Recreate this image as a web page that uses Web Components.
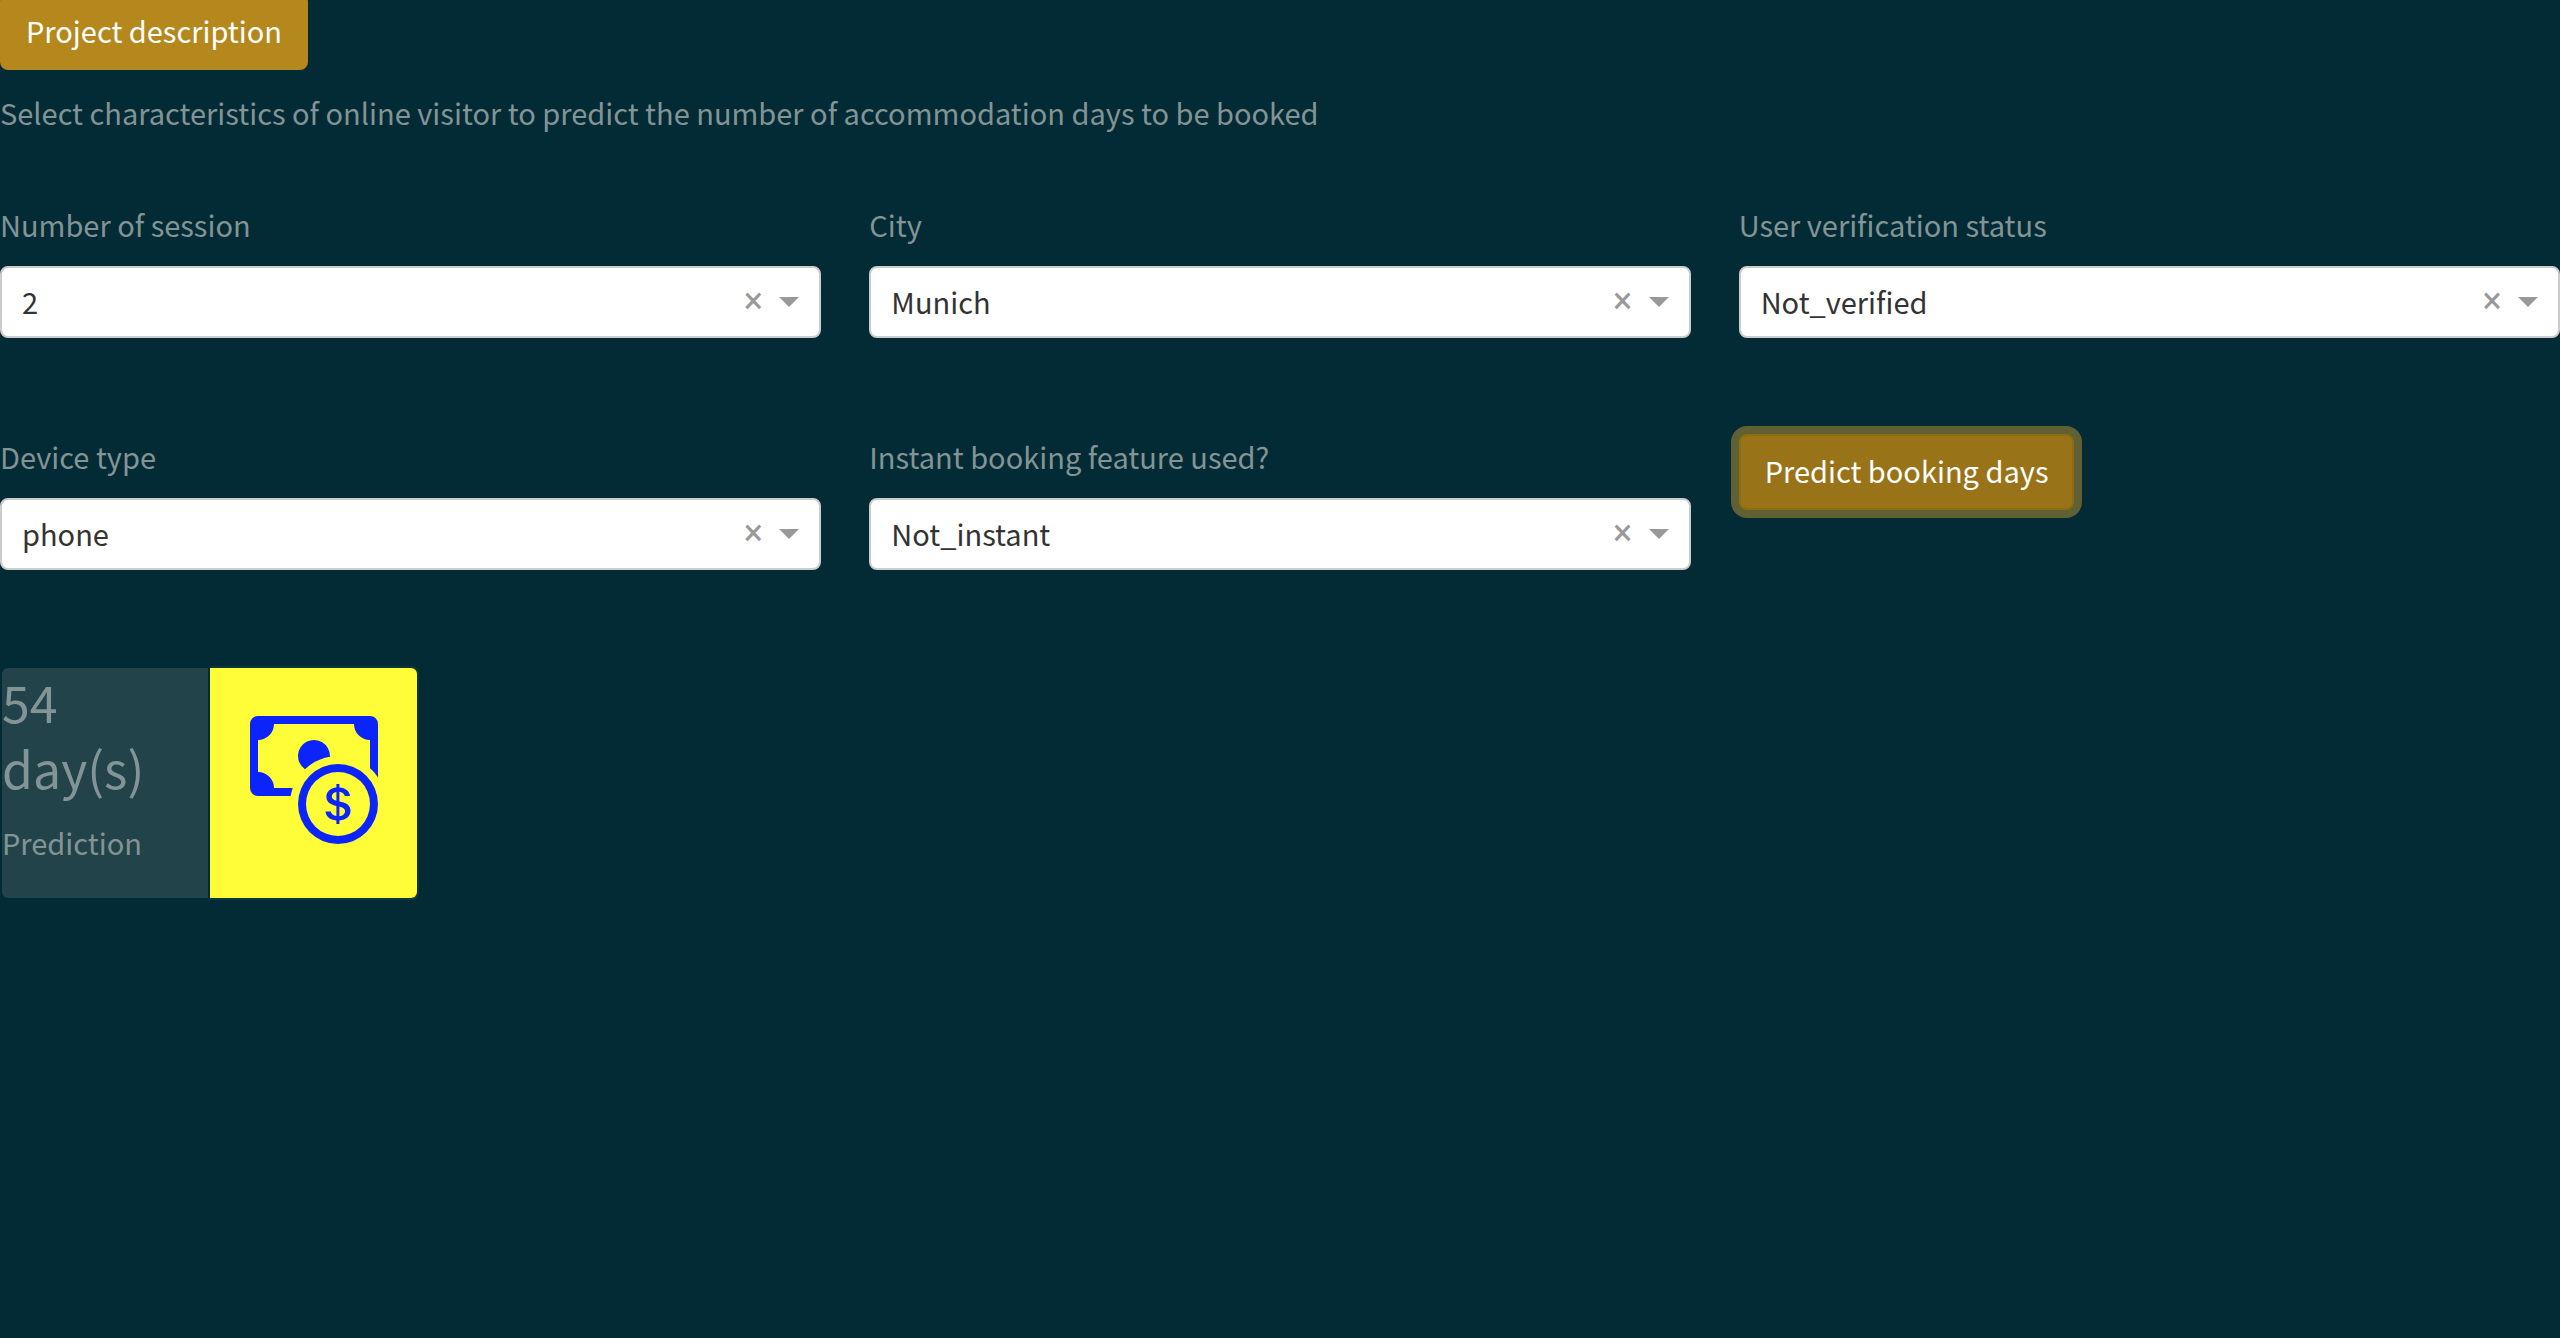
<!DOCTYPE html>
<html lang="en">
<head>
<meta charset="utf-8">
<title>Booking days prediction</title>
<style>
  :root {
    --bg: #022b35;
    --text: #839496;
    --gold: #b4881d;
    --gold-active: #997317;
    --gold-edge: #8f6b14;
    --ring: #5f6135;
    --size: 29px;
    --line: 44px;
    --gap: 48px;
  }
  body {
    margin: 0;
    background: var(--bg);
    color: var(--text);
    font: 400 var(--size)/var(--line) "Source Sans Pro", "Noto Sans CJK SC", "Noto Sans", sans-serif;
  }
</style>
</head>
<body>
<booking-app></booking-app>

<script>
class ActionButton extends HTMLElement {
  constructor() {
    super();
    this.attachShadow({ mode: "open" }).innerHTML = `
      <style>
        :host { display: inline-flex; }
        button {
          box-sizing: border-box;
          padding: 12px 24px 16px;
          border: 2px solid var(--gold);
          border-radius: 8px;
          background: var(--gold);
          color: #fff;
          font: inherit;
          cursor: pointer;
        }
        :host([current]) button {
          background: var(--gold-active);
          border-color: var(--gold-edge);
          box-shadow: 0 0 0 8px var(--ring);
          outline: none;
        }
      </style>
      <button type="button"><slot></slot></button>`;
  }
}
customElements.define("action-button", ActionButton);

class SelectField extends HTMLElement {
  constructor() {
    super();
    this.attachShadow({ mode: "open" }).innerHTML = `
      <style>
        :host { display: flex; flex-direction: column; gap: 20px; min-width: 0; }
        .box {
          box-sizing: border-box;
          display: grid;
          grid-template-columns: 1fr 32px 20px;
          column-gap: 10px;
          align-items: center;
          height: 72px;
          padding-right: 20px;
          border: 2px solid #ccc;
          border-radius: 8px;
          background: #fff;
        }
        select {
          grid-area: 1 / 1 / 2 / -1;
          appearance: none;
          width: 100%;
          height: 68px;
          padding: 0 20px 2px;
          border: 0;
          background: transparent;
          color: #333;
          font: inherit;
        }
        button {
          grid-area: 1 / 2;
          padding: 0 0 2px;
          border: 0;
          background: none;
          color: #999;
          font: 400 36px/32px Roboto, sans-serif;
          cursor: pointer;
        }
        svg { grid-area: 1 / 3; width: 20px; height: 10px; pointer-events: none; }
      </style>
      <label for="choice"></label>
      <div class="box">
        <select id="choice"></select>
        <button type="button" aria-label="Clear value">×</button>
        <svg viewBox="0 0 20 10" aria-hidden="true"><path d="M0 0h20L10 10z" fill="#999"/></svg>
      </div>`;
    const select = this.shadowRoot.querySelector("select");
    this.shadowRoot.querySelector("button").addEventListener("click", () => { select.selectedIndex = -1; });
  }
  connectedCallback() {
    this.shadowRoot.querySelector("label").textContent = this.getAttribute("label");
    this.shadowRoot.querySelector("select").replaceChildren(new Option(this.getAttribute("value")));
  }
}
customElements.define("select-field", SelectField);

class CashIcon extends HTMLElement {
  constructor() {
    super();
    this.attachShadow({ mode: "open" }).innerHTML = `
      <style>
        :host { display: block; width: 128px; height: 128px; }
        svg { display: block; width: 100%; height: 100%; }
      </style>
      <svg viewBox="0 0 16 16" fill="currentColor" aria-hidden="true">
        <path fill-rule="evenodd" d="M11 15a4 4 0 1 0 0-8 4 4 0 0 0 0 8zm5-4a5 5 0 1 1-10 0 5 5 0 0 1 10 0z"/>
        <path d="M9.438 11.944c.047.596.518 1.06 1.363 1.116v.44h.375v-.443c.875-.061 1.386-.529 1.386-1.207 0-.618-.39-.936-1.09-1.1l-.296-.07v-1.2c.376.043.614.248.671.532h.658c-.047-.575-.54-1.024-1.329-1.073V8.5h-.375v.45c-.747.073-1.255.522-1.255 1.158 0 .562.378.92 1.007 1.066l.248.061v1.272c-.384-.058-.639-.27-.696-.563h-.668zm1.36-1.354c-.369-.085-.569-.26-.569-.522 0-.294.216-.514.572-.578v1.1h-.003zm.432.746c.449.104.655.272.655.569 0 .339-.257.571-.709.614v-1.195l.054.012z"/>
        <path d="M1 0a1 1 0 0 0-1 1v8a1 1 0 0 0 1 1h4.083c.058-.344.145-.678.258-1H3a2 2 0 0 0-2-2V3a2 2 0 0 0 2-2h10a2 2 0 0 0 2 2v3.528c.38.34.717.728 1 1.154V1a1 1 0 0 0-1-1H1z"/>
        <path d="M9.998 5.083 10 5a2 2 0 1 0-3.132 1.65 5.982 5.982 0 0 1 3.13-1.567z"/>
      </svg>`;
  }
}
customElements.define("cash-icon", CashIcon);

class PredictionCard extends HTMLElement {
  constructor() {
    super();
    this.attachShadow({ mode: "open" }).innerHTML = `
      <style>
        :host { display: grid; grid-template-columns: 1fr 1fr; gap: 2px; padding: 2px; }
        .body { padding-bottom: 34px; border-radius: 6px 0 0 6px; background: #214349; }
        h2 { margin: 0; padding-bottom: 20px; font-size: 50px; line-height: 66px; font-weight: 400; width: min-content; }
        p { margin: 0; }
        .picture {
          display: flex;
          justify-content: center;
          padding-top: 48px;
          border-radius: 0 6px 6px 0;
          background: #fffd38;
          color: #0b24fb;
          box-shadow: 1px -1px 0 1px #0d373c, 1px 1px 0 1px #0d373c;
        }
      </style>
      <div class="body">
        <h2><slot name="value"></slot></h2>
        <p><slot></slot></p>
      </div>
      <div class="picture"><cash-icon></cash-icon></div>`;
  }
}
customElements.define("prediction-card", PredictionCard);

class BookingApp extends HTMLElement {
  constructor() {
    super();
    this.attachShadow({ mode: "open" }).innerHTML = `
      <style>
        :host { display: block; overflow: hidden; }
        .top { display: flex; margin-top: -6px; }
        p { margin: 20px 0 68px; }
        form {
          display: grid;
          grid-template-columns: repeat(3, minmax(0, 1fr));
          column-gap: var(--gap);
          row-gap: 96px;
          align-items: start;
        }
        prediction-card { width: 16.36%; box-sizing: border-box; margin-top: 96px; }
      </style>
      <div class="top"><action-button>Project description</action-button></div>
      <p>Select characteristics of online visitor to predict the number of accommodation days to be booked</p>
      <form>
        <select-field label="Number of session" value="2"></select-field>
        <select-field label="City" value="Munich"></select-field>
        <select-field label="User verification status" value="Not_verified"></select-field>
        <select-field label="Device type" value="phone"></select-field>
        <select-field label="Instant booking feature used?" value="Not_instant"></select-field>
        <div><action-button current>Predict booking days</action-button></div>
      </form>
      <prediction-card><span slot="value">54 day(s)</span>Prediction</prediction-card>`;
  }
}
customElements.define("booking-app", BookingApp);
</script>
</body>
</html>
